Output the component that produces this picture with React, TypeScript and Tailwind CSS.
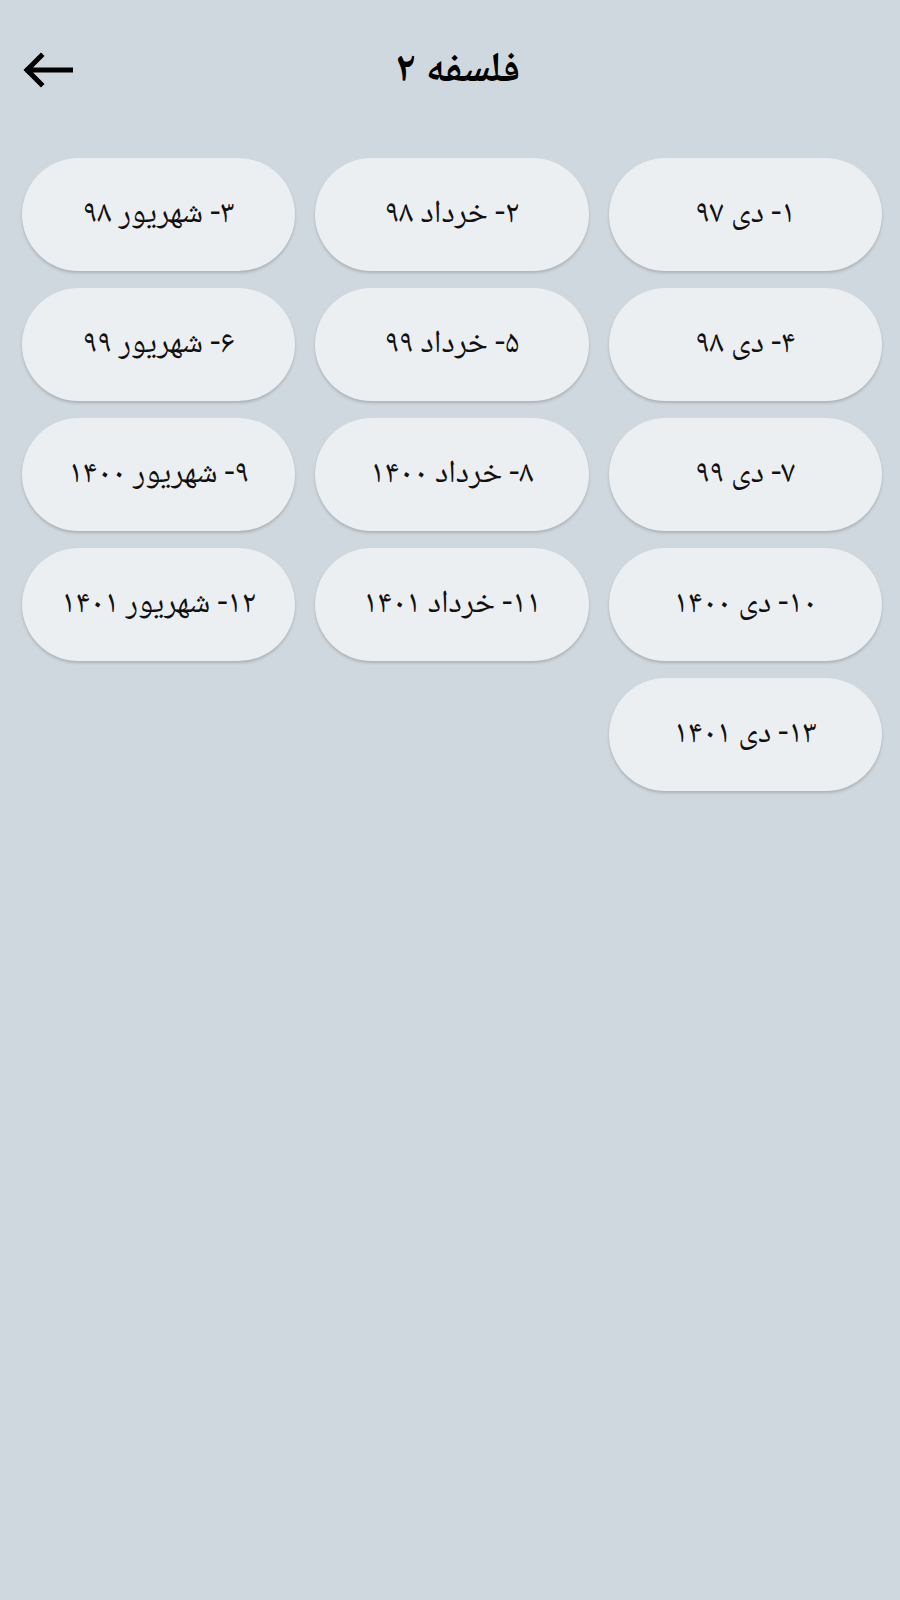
// Exam sessions list for a single course
const sessions = [
  '۱- دی ۹۷',
  '۲- خرداد ۹۸',
  '۳- شهریور ۹۸',
  '۴- دی ۹۸',
  '۵- خرداد ۹۹',
  '۶- شهریور ۹۹',
  '۷- دی ۹۹',
  '۸- خرداد ۱۴۰۰',
  '۹- شهریور ۱۴۰۰',
  '۱۰- دی ۱۴۰۰',
  '۱۱- خرداد ۱۴۰۱',
  '۱۲- شهریور ۱۴۰۱',
  '۱۳- دی ۱۴۰۱',
];

const font = {
  fontFamily: '"Noto Naskh Arabic", "Noto Sans Arabic", "DejaVu Sans", serif',
};

function BackArrow() {
  return (
    <svg width="52" height="36" viewBox="0 0 52 36" fill="none">
      <path
        d="M50 18H7M20 4L6 18l14 14"
        stroke="#000"
        strokeWidth="5"
        strokeLinecap="square"
      />
    </svg>
  );
}

export default function App() {
  return (
    <div className="min-h-[1600px] w-full bg-[#d0d8df]" style={font}>
      {/* Header */}
      <div className="flex h-[140px] items-center pl-[21px] pr-[21px]">
        <button className="flex w-[52px] items-center">
          <BackArrow />
        </button>
        <h1 className="flex-1 pl-4 pt-1 text-center text-[42px] font-bold text-black" dir="rtl">
          فلسفه ۲
        </h1>
        <div className="w-[52px]" />
      </div>

      {/* Sessions grid */}
      <div dir="rtl" className="mt-[18px] grid grid-cols-3 gap-x-5 gap-y-[17px] pl-[22px] pr-[18px]">
        {sessions.map((s) => (
          <button
            key={s}
            className="flex h-[113px] items-center justify-center rounded-full bg-[#eceff2] text-[32px] text-[#111] shadow-[0_2px_3px_rgba(0,0,0,0.18)]"
          >
            {s}
          </button>
        ))}
      </div>
    </div>
  );
}
